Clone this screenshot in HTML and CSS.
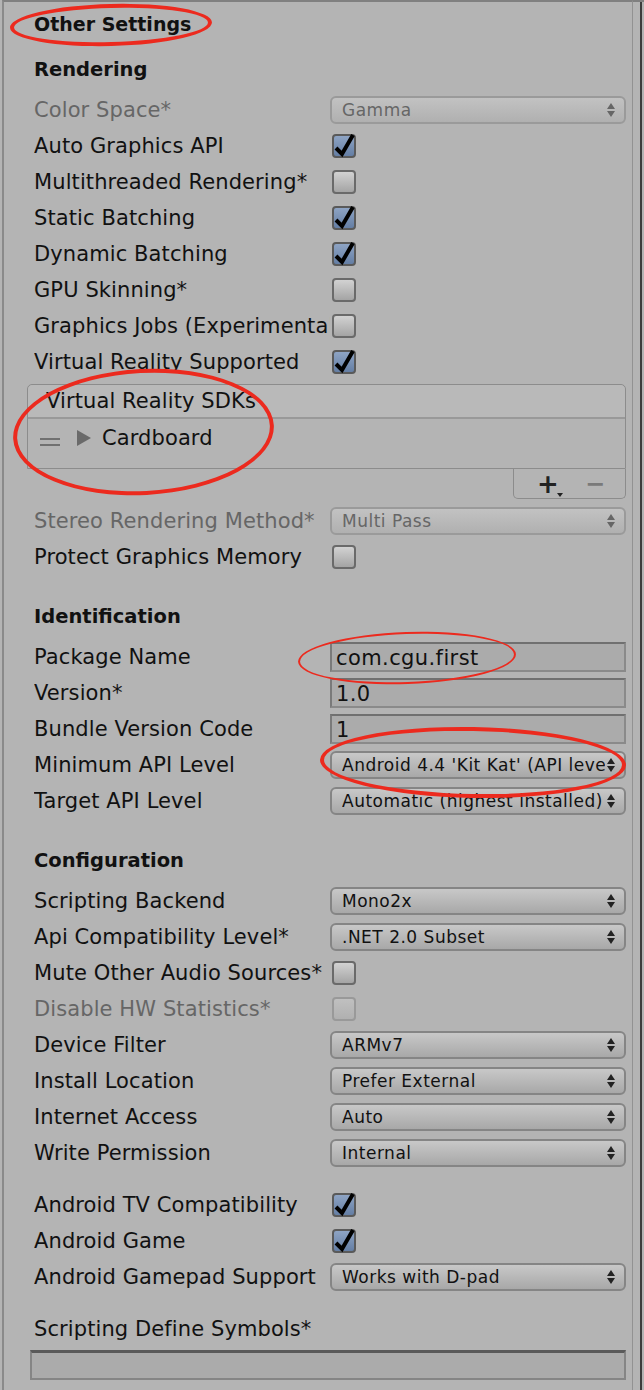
FILE: index.html
```html
<!DOCTYPE html>
<html>
<head>
<meta charset="utf-8">
<link rel="stylesheet" href="styles.css">
</head>
<body>
<div class="window">
  <div class="panel">
    <div class="foldout">Other Settings</div>

    <div class="heading first">Rendering</div>
    <div class="row disabled"><span class="label">Color Space*</span><div class="popup"><span class="ptext">Gamma</span><svg class="arr" width="8" height="14" viewBox="0 0 8 14"><path d="M4 0L8 6H0Z M4 14L8 8H0Z"/></svg></div></div>
    <div class="row"><span class="label">Auto Graphics API</span><span class="check on"><svg width="24" height="24" viewBox="0 0 24 24"><polyline points="4,14 10,20 21,1"/></svg></span></div>
    <div class="row"><span class="label">Multithreaded Rendering*</span><span class="check"></span></div>
    <div class="row"><span class="label">Static Batching</span><span class="check on"><svg width="24" height="24" viewBox="0 0 24 24"><polyline points="4,14 10,20 21,1"/></svg></span></div>
    <div class="row"><span class="label">Dynamic Batching</span><span class="check on"><svg width="24" height="24" viewBox="0 0 24 24"><polyline points="4,14 10,20 21,1"/></svg></span></div>
    <div class="row"><span class="label">GPU Skinning*</span><span class="check"></span></div>
    <div class="row"><span class="label">Graphics Jobs (Experimental)*</span><span class="check"></span></div>
    <div class="row"><span class="label">Virtual Reality Supported</span><span class="check on"><svg width="24" height="24" viewBox="0 0 24 24"><polyline points="4,14 10,20 21,1"/></svg></span></div>

    <div class="vrlist">
      <div class="vrbox">
        <div class="vrhead">Virtual Reality SDKs</div>
        <div class="vritem">
          <span class="handle"></span>
          <svg class="tri" width="14" height="16" viewBox="0 0 14 16"><path d="M0 0L14 8L0 16Z"/></svg>
          <span class="vrname">Cardboard</span>
        </div>
      </div>
      <div class="vrfoot">
        <span class="plus">+<svg class="mini" width="6" height="4" viewBox="0 0 6 4"><path d="M0 0H6L3 4Z"/></svg></span>
        <span class="minus">−</span>
      </div>
    </div>

    <div class="row disabled"><span class="label">Stereo Rendering Method*</span><div class="popup"><span class="ptext">Multi Pass</span><svg class="arr" width="8" height="14" viewBox="0 0 8 14"><path d="M4 0L8 6H0Z M4 14L8 8H0Z"/></svg></div></div>
    <div class="row"><span class="label">Protect Graphics Memory</span><span class="check"></span></div>

    <div class="heading">Identification</div>
    <div class="row"><span class="label">Package Name</span><div class="field">com.cgu.first</div></div>
    <div class="row"><span class="label">Version*</span><div class="field">1.0</div></div>
    <div class="row"><span class="label">Bundle Version Code</span><div class="field">1</div></div>
    <div class="row"><span class="label">Minimum API Level</span><div class="popup"><span class="ptext">Android 4.4 'Kit Kat' (API level 19)</span><svg class="arr" width="8" height="14" viewBox="0 0 8 14"><path d="M4 0L8 6H0Z M4 14L8 8H0Z"/></svg></div></div>
    <div class="row"><span class="label">Target API Level</span><div class="popup"><span class="ptext">Automatic (highest installed)</span><svg class="arr" width="8" height="14" viewBox="0 0 8 14"><path d="M4 0L8 6H0Z M4 14L8 8H0Z"/></svg></div></div>

    <div class="heading">Configuration</div>
    <div class="row"><span class="label">Scripting Backend</span><div class="popup"><span class="ptext">Mono2x</span><svg class="arr" width="8" height="14" viewBox="0 0 8 14"><path d="M4 0L8 6H0Z M4 14L8 8H0Z"/></svg></div></div>
    <div class="row"><span class="label">Api Compatibility Level*</span><div class="popup"><span class="ptext">.NET 2.0 Subset</span><svg class="arr" width="8" height="14" viewBox="0 0 8 14"><path d="M4 0L8 6H0Z M4 14L8 8H0Z"/></svg></div></div>
    <div class="row"><span class="label">Mute Other Audio Sources*</span><span class="check"></span></div>
    <div class="row disabled"><span class="label">Disable HW Statistics*</span><span class="check off"></span></div>
    <div class="row"><span class="label">Device Filter</span><div class="popup"><span class="ptext">ARMv7</span><svg class="arr" width="8" height="14" viewBox="0 0 8 14"><path d="M4 0L8 6H0Z M4 14L8 8H0Z"/></svg></div></div>
    <div class="row"><span class="label">Install Location</span><div class="popup"><span class="ptext">Prefer External</span><svg class="arr" width="8" height="14" viewBox="0 0 8 14"><path d="M4 0L8 6H0Z M4 14L8 8H0Z"/></svg></div></div>
    <div class="row"><span class="label">Internet Access</span><div class="popup"><span class="ptext">Auto</span><svg class="arr" width="8" height="14" viewBox="0 0 8 14"><path d="M4 0L8 6H0Z M4 14L8 8H0Z"/></svg></div></div>
    <div class="row"><span class="label">Write Permission</span><div class="popup"><span class="ptext">Internal</span><svg class="arr" width="8" height="14" viewBox="0 0 8 14"><path d="M4 0L8 6H0Z M4 14L8 8H0Z"/></svg></div></div>

    <div class="row gap"><span class="label">Android TV Compatibility</span><span class="check on"><svg width="24" height="24" viewBox="0 0 24 24"><polyline points="4,14 10,20 21,1"/></svg></span></div>
    <div class="row"><span class="label">Android Game</span><span class="check on"><svg width="24" height="24" viewBox="0 0 24 24"><polyline points="4,14 10,20 21,1"/></svg></span></div>
    <div class="row"><span class="label">Android Gamepad Support</span><div class="popup"><span class="ptext">Works with D-pad</span><svg class="arr" width="8" height="14" viewBox="0 0 8 14"><path d="M4 0L8 6H0Z M4 14L8 8H0Z"/></svg></div></div>

    <div class="row gap"><span class="label wide">Scripting Define Symbols*</span></div>
    <div class="symbols"></div>

    <div class="mark m1"></div>
    <div class="mark m2"></div>
    <div class="mark m3"></div>
    <div class="mark m4"></div>
  </div>
  <div class="edge"></div>
</div>
</body>
</html>
```

FILE: styles.css
```css
html, body {
  margin: 0;
  padding: 0;
  background: #b4b4b4;
}

body {
  font-family: "DejaVu Sans", "Liberation Sans", sans-serif;
  font-size: 21px;
  letter-spacing: 0.1px;
  color: #111;
}

.window {
  display: flex;
  width: 644px;
  height: 1390px;
  overflow: hidden;
}

.panel {
  position: relative;
  flex: 1;
  min-width: 0;
  margin-left: 2px;
  border-left: 2px solid #8a8a8a;
  border-top: 2px solid #808080;
  border-right: 1px solid #929292;
  padding: 4px 6px 0 30px;
  box-sizing: border-box;
}

.edge {
  width: 11px;
  flex: none;
  border-top: 2px solid #808080;
  box-sizing: border-box;
  display: flex;
  justify-content: flex-end;
}
.edge::after {
  content: "";
  width: 2px;
  margin-right: 2px;
  background: #3c3c3c;
}

.foldout {
  height: 36px;
  line-height: 36px;
  font-weight: bold;
  font-size: 19px;
  letter-spacing: 0;
}

.heading {
  height: 36px;
  line-height: 36px;
  font-weight: bold;
  font-size: 19.5px;
  letter-spacing: 0;
  margin-top: 24px;
  margin-bottom: 4px;
}
.heading.first {
  margin-top: 10px;
}

.row {
  display: flex;
  align-items: center;
  height: 36px;
}
.row.gap {
  margin-top: 16px;
}

.label {
  width: 296px;
  flex: none;
  white-space: nowrap;
  overflow: hidden;
}
.label.wide {
  width: auto;
}

.disabled .label {
  color: #666;
}

/* checkbox */
.check {
  position: relative;
  width: 24px;
  height: 24px;
  margin-left: 2px;
  box-sizing: border-box;
  border: 2px solid #6a6a6a;
  border-radius: 4px;
  background: linear-gradient(#d2d2d2, #a4a4a4);
}
.check.on {
  background: linear-gradient(#8ea4c4, #647ea4);
  border-color: #5a5a5a;
}
.check.off {
  background: linear-gradient(#c0c0c0, #b0b0b0);
  border-color: #999;
}
.check svg {
  position: absolute;
  left: -2px;
  top: -2px;
  overflow: visible;
}
.check polyline {
  fill: none;
  stroke: #000;
  stroke-width: 4;
  stroke-linejoin: miter;
}

/* popup */
.popup {
  flex: 1;
  min-width: 0;
  height: 28px;
  box-sizing: border-box;
  border: 2px solid #858585;
  border-radius: 6px;
  background: linear-gradient(#c8c8c8, #a8a8a8);
  display: flex;
  align-items: center;
  padding: 0 9px 0 10px;
  font-size: 17px;
  letter-spacing: 0.5px;
  color: #111;
}
.ptext {
  flex: 1;
  min-width: 0;
  white-space: nowrap;
  overflow: hidden;
}
.arr {
  flex: none;
  margin-left: 2px;
  fill: #222;
}
.disabled .popup {
  border-color: #9a9a9a;
  background: linear-gradient(#c2c2c2, #b0b0b0);
  color: #666;
}
.disabled .arr {
  fill: #666;
}

/* text field */
.field {
  flex: 1;
  min-width: 0;
  height: 30px;
  line-height: 28px;
  box-sizing: border-box;
  background: #ababab;
  border: 2px solid #8a8a8a;
  border-top-color: #707070;
  border-left-color: #7a7a7a;
  padding-left: 4px;
  font-size: 21px;
  letter-spacing: 0.4px;
  color: #111;
}

/* VR list */
.vrlist {
  margin: 4px 0 4px -7px;
  display: flex;
  flex-direction: column;
}
.vrbox {
  height: 85px;
  box-sizing: border-box;
  border: 1px solid #8c8c8c;
  border-radius: 5px 5px 0 0;
  display: flex;
  flex-direction: column;
}
.vrhead {
  height: 34px;
  line-height: 32px;
  box-sizing: border-box;
  border-bottom: 2px solid #999;
  padding-left: 18px;
  background: #b9b9b9;
  border-radius: 5px 5px 0 0;
}
.vritem {
  flex: 1;
  display: flex;
  align-items: center;
  padding-left: 12px;
  padding-bottom: 12px;
}
.handle {
  width: 20px;
  height: 8px;
  margin-top: 8px;
  border-top: 2px solid #707070;
  border-bottom: 2px solid #707070;
  box-sizing: border-box;
}
.tri {
  fill: #6a6a6a;
  margin-left: 17px;
}
.vrname {
  margin-left: 11px;
  font-size: 21px;
}
.vrfoot {
  align-self: flex-end;
  width: 113px;
  height: 30px;
  box-sizing: border-box;
  border: 1px solid #8c8c8c;
  border-top: none;
  border-radius: 0 0 5px 5px;
  display: flex;
  align-items: center;
  padding-left: 23px;
  gap: 26px;
}
.plus {
  position: relative;
  font-size: 26px;
  font-weight: bold;
  color: #222;
  line-height: 1;
}
.mini {
  position: absolute;
  right: -4px;
  bottom: 0;
  fill: #222;
}
.minus {
  font-size: 24px;
  font-weight: bold;
  color: #7a7a7a;
  line-height: 1;
}

/* symbols field */
.symbols {
  margin: 3px 0 0 -4px;
  height: 30px;
  box-sizing: border-box;
  background: #ababab;
  border: 2px solid #858585;
  border-top: 3px solid #5a5a5a;
}

/* red annotation marks */
.mark {
  position: absolute;
  border: 4px solid #ec2a1e;
  border-radius: 50%;
  box-sizing: border-box;
}
.m1 {
  left: 6px;
  top: 2px;
  width: 202px;
  height: 42px;
  transform: rotate(-1.5deg);
}
.m2 {
  left: 9px;
  top: 367px;
  width: 261px;
  height: 126px;
  transform: rotate(-3deg);
}
.m3 {
  left: 294px;
  top: 630px;
  width: 218px;
  height: 52px;
  border-width: 2px;
  transform: rotate(-2deg);
}
.m4 {
  left: 316px;
  top: 725px;
  width: 306px;
  height: 71px;
  transform: rotate(1deg);
}
```
